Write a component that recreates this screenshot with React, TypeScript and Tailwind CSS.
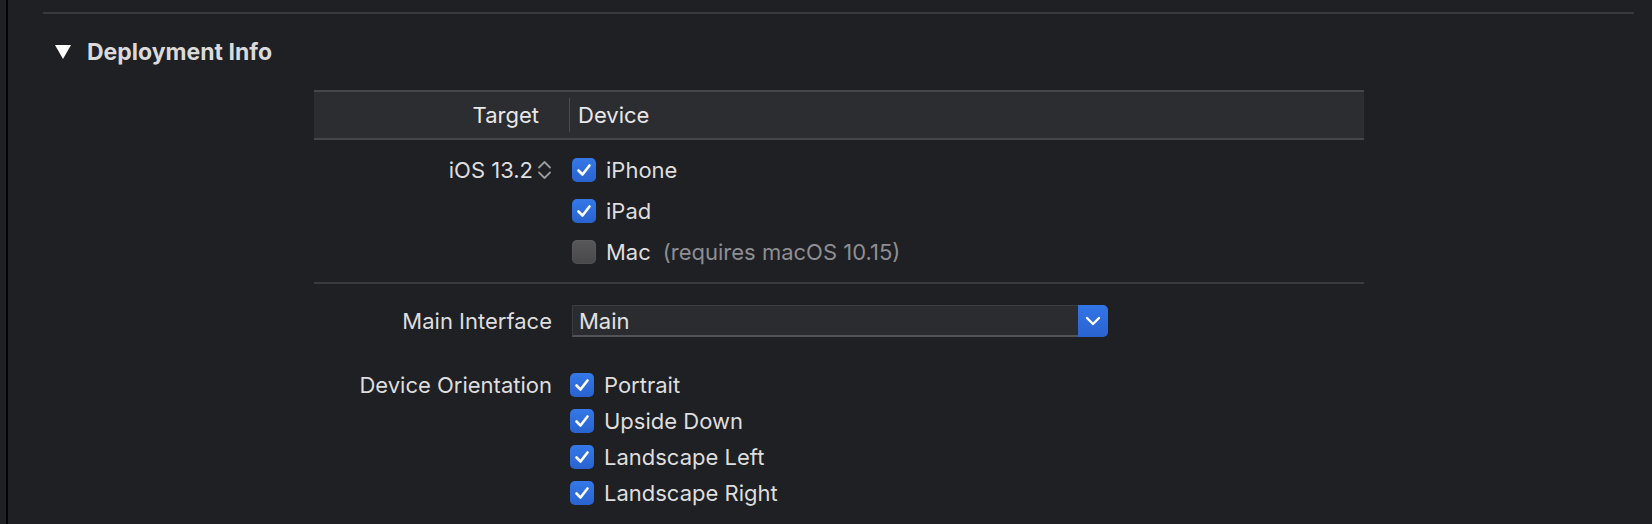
import React from 'react';

const font = { fontFamily: 'Inter, "Noto Sans", "Liberation Sans", sans-serif' };

function CheckBox({ checked }: { checked: boolean }) {
  if (!checked) {
    return (
      <div className="w-[24px] h-[24px] rounded-[5px] bg-gradient-to-b from-[#58585b] to-[#48484b] shadow-[inset_0_0_0_1px_rgba(255,255,255,0.04)]" />
    );
  }
  return (
    <div className="w-[24px] h-[24px] rounded-[5px] bg-gradient-to-b from-[#3478e8] to-[#2a63d0] flex items-center justify-center">
      <svg width="24" height="24" viewBox="0 0 24 24" fill="none">
        <path d="M6.5 12.5 L10.5 16.5 L17.5 7.5" stroke="white" strokeWidth="2.6" strokeLinecap="round" strokeLinejoin="round" />
      </svg>
    </div>
  );
}

function Stepper() {
  return (
    <svg width="15" height="20" viewBox="0 0 15 20" fill="none">
      <path d="M2 7.5 L7.5 2 L13 7.5" stroke="#9a9a9e" strokeWidth="1.8" strokeLinecap="round" strokeLinejoin="round" />
      <path d="M2 12.5 L7.5 18 L13 12.5" stroke="#9a9a9e" strokeWidth="1.8" strokeLinecap="round" strokeLinejoin="round" />
    </svg>
  );
}

function CheckRow({ label, extra, checked = true, h = 'h-[41px]', offset = 'ml-[20px]' }: { label: string; extra?: string; checked?: boolean; h?: string; offset?: string }) {
  return (
    <div className={`flex items-center ${h}`}>
      <div className="w-[238px]" />
      <div className={`flex items-center ${offset}`}>
        <CheckBox checked={checked} />
        <span className="ml-[10px] text-[#dededf]">{label}</span>
        {extra && <span className="ml-[12px] text-[#8e8e93]">{extra}</span>}
      </div>
    </div>
  );
}

export default function App() {
  return (
    <div className="w-[1652px] h-[524px] bg-[#1f2023] pl-[6px] overflow-hidden text-[22px] leading-[28px]" style={font}>
      <div className="h-full border-l-2 border-black">
        <div className="ml-[35px] mr-[18px] pt-[12px]">
          <div className="h-[2px] bg-[#38393c]" />
        </div>

        {/* Section title */}
        <div className="flex items-center ml-[47px] mt-[24px] h-[28px]">
          <svg width="16" height="14" viewBox="0 0 16 14">
            <path d="M0 0 H16 L8 14 Z" fill="#ffffff" />
          </svg>
          <span className="ml-[16px] font-bold text-[23px] text-[#dadadb]">Deployment Info</span>
        </div>

        <div className="ml-[306px] w-[1050px] mt-[24px]">
          {/* Table header */}
          <div className="flex items-center h-[50px] bg-[#2c2d31] border-y-2 border-[#46474b] text-[#e8e8e9]">
            <div className="w-[255px] text-right pr-[30px]">Target</div>
            <div className="w-[1px] h-[34px] bg-[#4a4b4f]" />
            <div className="pl-[8px]">Device</div>
          </div>

          <div className="mt-[9px]">
            <div className="flex items-center h-[41px]">
              <div className="w-[238px] flex items-center justify-end text-[#dededf]">
                <span>iOS 13.2</span>
                <span className="ml-[4px] flex"><Stepper /></span>
              </div>
              <div className="flex items-center ml-[20px]">
                <CheckBox checked />
                <span className="ml-[10px] text-[#dededf]">iPhone</span>
              </div>
            </div>
            <CheckRow label="iPad" />
            <CheckRow label="Mac" extra="(requires macOS 10.15)" checked={false} />
          </div>

          <div className="mt-[10px] h-[2px] bg-[#3a3b3e]" />

          {/* Main Interface */}
          <div className="flex items-center mt-[21px] h-[32px]">
            <div className="w-[238px] text-right text-[#dededf]">Main Interface</div>
            <div className="ml-[20px] w-[536px] h-[32px] flex">
              <div className="flex-1 flex items-center bg-[#2b2c30] border-t border-[#3c3d41] border-b-2 border-b-[#525357] border-l border-l-[#3a3b3f] pl-[6px] text-[#e2e2e3]">
                Main
              </div>
              <div className="w-[30px] h-[32px] rounded-r-[5px] bg-gradient-to-b from-[#3275e6] to-[#2a63d0] flex items-center justify-center">
                <svg width="16" height="10" viewBox="0 0 16 10" fill="none">
                  <path d="M2 2 L8 8 L14 2" stroke="white" strokeWidth="2.4" strokeLinecap="round" strokeLinejoin="round" />
                </svg>
              </div>
            </div>
          </div>

          {/* Device Orientation */}
          <div className="mt-[30px]">
            <div className="flex items-center h-[36px]">
              <div className="w-[238px] text-right text-[#dededf]">Device Orientation</div>
              <div className="flex items-center ml-[18px]">
                <CheckBox checked />
                <span className="ml-[10px] text-[#dededf]">Portrait</span>
              </div>
            </div>
            <CheckRow label="Upside Down" h="h-[36px]" offset="ml-[18px]" />
            <CheckRow label="Landscape Left" h="h-[36px]" offset="ml-[18px]" />
            <CheckRow label="Landscape Right" h="h-[36px]" offset="ml-[18px]" />
          </div>
        </div>
      </div>
    </div>
  );
}
